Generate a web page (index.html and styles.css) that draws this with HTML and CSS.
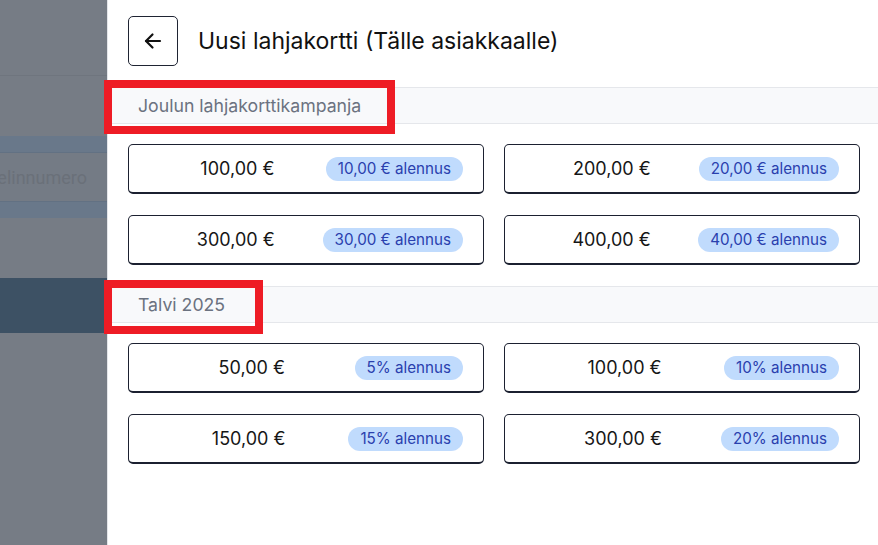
FILE: index.html
```html
<!DOCTYPE html>
<html lang="fi">
<head>
<meta charset="utf-8">
<title>Uusi lahjakortti</title>
<link rel="stylesheet" href="styles.css">
</head>
<body>
<div class="screen">
  <div class="backdrop">
    <div class="bd bd-top"></div>
    <div class="bd bd-gap"></div>
    <div class="bd bd-blue-a"></div>
    <div class="bd bd-input"><span>Puhelinnumero</span></div>
    <div class="bd bd-blue-b"></div>
    <div class="bd bd-gray"></div>
    <div class="bd bd-dark"></div>
    <div class="bd bd-rest"></div>
  </div>
  <div class="panel">
    <header class="head">
      <button class="back" type="button" aria-label="Takaisin">
        <svg width="24" height="24" viewBox="0 0 24 24" fill="none" stroke="#111" stroke-width="2.2" stroke-linecap="round" stroke-linejoin="round"><path d="M19 12H5"/><path d="M11.5 5.5L5 12l6.5 6.5"/></svg>
      </button>
      <h1 class="title">Uusi lahjakortti (Tälle asiakkaalle)</h1>
    </header>

    <section class="group">
      <div class="group-head"><span class="group-name">Joulun lahjakorttikampanja</span><span class="mark mark-1"></span></div>
      <div class="grid">
        <button class="card" type="button"><span class="amount">100,00 €</span><span class="badge">10,00 € alennus</span></button>
        <button class="card" type="button"><span class="amount">200,00 €</span><span class="badge">20,00 € alennus</span></button>
        <button class="card" type="button"><span class="amount">300,00 €</span><span class="badge">30,00 € alennus</span></button>
        <button class="card" type="button"><span class="amount">400,00 €</span><span class="badge">40,00 € alennus</span></button>
      </div>
    </section>

    <section class="group">
      <div class="group-head"><span class="group-name">Talvi 2025</span><span class="mark mark-2"></span></div>
      <div class="grid">
        <button class="card" type="button"><span class="amount">50,00 €</span><span class="badge">5% alennus</span></button>
        <button class="card" type="button"><span class="amount">100,00 €</span><span class="badge">10% alennus</span></button>
        <button class="card" type="button"><span class="amount">150,00 €</span><span class="badge">15% alennus</span></button>
        <button class="card" type="button"><span class="amount">300,00 €</span><span class="badge">20% alennus</span></button>
      </div>
    </section>
  </div>
</div>
</body>
</html>
```

FILE: styles.css
```css
* { box-sizing: border-box; }
html, body { margin: 0; padding: 0; }
body {
  font-family: Inter, "Noto Sans", "DejaVu Sans", sans-serif;
  background: #ffffff;
  width: 878px;
  height: 545px;
  overflow: hidden;
}
.screen {
  display: flex;
  width: 878px;
  height: 545px;
}
.backdrop {
  width: 107px;
  flex: none;
  display: flex;
  flex-direction: column;
  background: #767c85;
}
.bd { flex: none; }
.bd-top { height: 76px; background: #767c85; border-bottom: 1px solid #6f757e; }
.bd-gap { height: 60px; background: #767c85; }
.bd-blue-a { height: 17px; background: #69788a; border-bottom: 1px solid #627183; }
.bd-input {
  height: 48px;
  background: #747b85;
  display: flex;
  align-items: center;
  justify-content: flex-end;
  overflow: hidden;
  padding-right: 20px;
  white-space: nowrap;
}
.bd-input span {
  font-size: 18px;
  color: #6a7079;
  font-family: Roboto, "Noto Sans", sans-serif;
}
.bd-blue-b { height: 17px; background: #69788a; border-top: 1px solid #627183; }
.bd-gray { height: 60px; background: #767c85; }
.bd-dark { height: 55px; background: #3d5164; }
.bd-rest { flex: 1; background: #767c85; }

.panel {
  flex: 1;
  border-left: 1px solid #e3e5e9;
  background: #ffffff;
  display: flex;
  flex-direction: column;
}
.head {
  display: flex;
  align-items: center;
  gap: 20px;
  padding: 16px 20px 21px 20px;
}
.back {
  width: 50px;
  height: 50px;
  border: 1px solid #1f2433;
  border-radius: 5px;
  background: #fff;
  display: flex;
  align-items: center;
  justify-content: center;
  padding: 0;
}
.title {
  margin: 0;
  font-size: 23px;
  font-weight: 400;
  color: #111;
  letter-spacing: 0;
}
.group { display: flex; flex-direction: column; }
.group-head {
  position: relative;
  height: 37px;
  background: #f8f9fb;
  border-top: 1px solid #e5e7eb;
  border-bottom: 1px solid #e5e7eb;
  display: flex;
  align-items: center;
  padding-left: 30px;
}
.group-name {
  font-size: 17.7px;
  color: #6b7280;
}
.mark {
  position: absolute;
  border: 8px solid #ee1c25;
  top: -8px;
  left: -4px;
  height: 54px;
}
.mark-1 { width: 291px; }
.mark-2 { width: 159px; top: -7px; }

.grid {
  display: grid;
  grid-template-columns: 356px 356px;
  column-gap: 20px;
  row-gap: 21px;
  padding: 20px 0 21px 20px;
}
.card {
  height: 50px;
  border: 1px solid #1b2030;
  border-bottom-width: 2px;
  border-radius: 5px;
  background: #fff;
  display: flex;
  align-items: center;
  padding: 0 20px;
  font-family: inherit;
}
.amount {
  flex: 1;
  text-align: center;
  font-size: 18px;
  color: #161616;
}
.badge {
  height: 24px;
  border-radius: 12px;
  background: #c0dbfd;
  color: #2a40ae;
  font-size: 15.2px;
  padding: 0 12px;
  display: flex;
  align-items: center;
}
```
